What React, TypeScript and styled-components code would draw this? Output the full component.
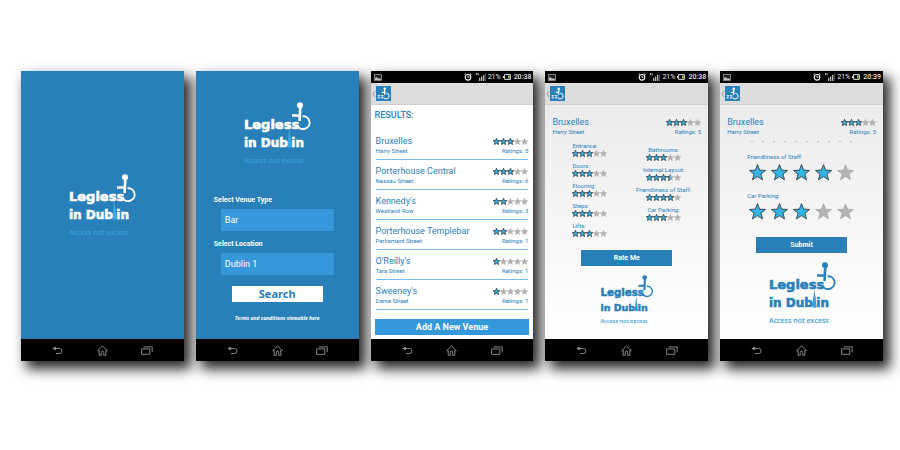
import React, { useId, useState } from "react";
import styled, { createGlobalStyle } from "styled-components";

const blue = "#2980b9";
const bright = "#3498db";
const starBlue = "#33b5e5";

const GlobalStyle = createGlobalStyle`
  *, *::before, *::after { box-sizing: border-box; }
  body { margin: 0; background: #fff; font-family: Roboto, sans-serif; }
  button, select { font-family: inherit; border: 0; border-radius: 0; margin: 0; padding: 0; cursor: pointer; }
  svg { display: block; }
`;

const Board = styled.main`
  display: grid;
  grid-template-columns: repeat(5, 1fr);
  gap: 12px;
  padding: 71px 17px 40px 21px;
`;

const Phone = styled.section`
  display: flex;
  flex-direction: column;
  min-width: 0;
  box-shadow: 6px 7px 12px 1px rgba(0, 0, 0, 0.85);
`;

type Tone = "blue" | "white" | "grey";
const tones: Record<Tone, string> = {
  blue,
  white: "#fff",
  grey: "linear-gradient(#e8e8e8, #f3f3f3 45%, #fff)",
};

const Screen = styled.div<{ $tone: Tone; $center?: boolean }>`
  flex: 1;
  display: flex;
  flex-direction: column;
  justify-content: ${(p) => (p.$center ? "center" : "flex-start")};
  background: ${(p) => tones[p.$tone]};
  color: ${(p) => (p.$tone === "blue" ? "#fff" : blue)};
`;

const NavBar = styled.nav`
  display: grid;
  grid-template-columns: repeat(3, 1fr);
  height: 22px;
  padding: 0 14px;
  background: #000;
`;

const NavButton = styled.button`
  display: grid;
  place-items: center;
  background: none;
`;

const StatusBar = styled.div`
  display: flex;
  align-items: center;
  gap: 2px;
  height: 12px;
  padding: 0 2px 0 3px;
  background: #000;
  color: #e8e8e8;
  font-size: 7px;
  line-height: 12px;
`;

const Push = styled.span`
  flex: 1;
`;

const Clock = styled.time`
  padding-left: 1px;
  font-weight: 500;
`;

const ActionBar = styled.header`
  display: flex;
  align-items: center;
  height: 22px;
  padding: 0 1px;
  background: #dcdcdc;
  border-bottom: 1px solid #cfcfcf;
`;

const HomeButton = styled.button`
  display: flex;
  align-items: center;
  background: none;
`;

const LogoSvg = styled.svg<{ $small?: boolean }>`
  width: ${(p) => (p.$small ? 53 : 66)}px;
  height: ${(p) => (p.$small ? 49 : 62)}px;
  flex: none;
  align-self: center;
  overflow: visible;
`;

const SearchForm = styled.form`
  display: flex;
  flex-direction: column;
  padding: 31px 25px 17px;
`;

const FieldLabel = styled.label<{ $first?: boolean }>`
  margin: ${(p) => (p.$first ? 31 : 8)}px 0 4px -7px;
  font-size: 7px;
  font-weight: 700;
  line-height: 10px;
`;

const Select = styled.select`
  appearance: none;
  height: 22px;
  padding: 0 4px;
  background: ${bright};
  color: #fff;
  font-size: 9px;
`;

const SearchButton = styled.button`
  height: 16px;
  margin: 11px 11px 12px;
  background: #fff;
  color: ${blue};
  font: 700 11px/16px "Noto Sans", sans-serif;
`;

const Terms = styled.a`
  align-self: center;
  color: #fff;
  font: italic 700 5px/8px "Open Sans", sans-serif;
  text-decoration: none;
  white-space: nowrap;
`;

const Results = styled.div`
  display: flex;
  flex-direction: column;
  padding: 4px 4px;
`;

const ResultsTitle = styled.h2`
  margin: 0 0 9px;
  font-size: 9px;
  font-weight: 500;
  line-height: 12px;
`;

const VenueList = styled.ul`
  list-style: none;
  margin: 0 1px 9px;
  padding: 0;
`;

const VenueItem = styled.li`
  padding: 5px 0 4px;
  border-bottom: 1px solid #7abcf0;
`;

const VenueLine = styled.div<{ $h: number }>`
  display: flex;
  align-items: center;
  justify-content: space-between;
  height: ${(p) => p.$h}px;
  line-height: ${(p) => p.$h}px;
  font-size: 6px;
  white-space: nowrap;
`;

const VenueName = styled.h3`
  margin: 0;
  font-size: 9px;
  font-weight: 400;
`;

const AddButton = styled.button`
  height: 16px;
  background: ${bright};
  color: #fff;
  font-size: 9px;
  font-weight: 700;
`;

const VenueHeader = styled.div`
  padding: 11px 7px 0;
`;

const ScoreColumns = styled.div`
  display: flex;
  justify-content: space-between;
  padding: 6px 17px 0 27px;
`;

const ScoreColumn = styled.div<{ $centered?: boolean }>`
  display: flex;
  flex-direction: column;
  gap: 5px;
  align-items: ${(p) => (p.$centered ? "center" : "flex-start")};
  padding-top: ${(p) => (p.$centered ? 4 : 0)}px;
`;

const Score = styled.div`
  display: flex;
  flex-direction: column;
  align-items: inherit;
  font-size: 6px;
  line-height: 8px;
  white-space: nowrap;
`;

const Stars = styled.div`
  display: flex;
`;

const MainButton = styled.button<{ $gap: number }>`
  height: 16px;
  margin: ${(p) => p.$gap}px 36px 9px;
  background: ${blue};
  color: #fff;
  font-size: 7px;
  font-weight: 700;
`;

const ScrollHint = styled.div`
  display: flex;
  justify-content: space-between;
  margin: 5px 31px 11px;
`;

const Speck = styled.i`
  width: 2px;
  height: 1px;
  background: #bdbdbd;
`;

const RateGroup = styled.fieldset`
  margin: 0 0 11px;
  padding: 0 0 0 27px;
  border: 0;
  min-width: 0;
`;

const RateLegend = styled.legend`
  padding: 0;
  margin-bottom: 3px;
  font-size: 6px;
  line-height: 8px;
`;

const RateStars = styled.div`
  display: flex;
  gap: 5px;
  padding-left: 2px;
`;

const RateStar = styled.label`
  display: grid;
  cursor: pointer;
  > * { grid-area: 1 / 1; }
`;

const RateInput = styled.input`
  appearance: none;
  width: 17px;
  height: 17px;
  margin: 0;
`;

const starPath = "M10 .8l2.5 6.5 6.9.3-5.4 4.3 1.9 6.7L10 14.8l-5.9 3.8L6 11.9.6 7.6l6.9-.3z";

function Star({ size, fill }: { size: number; fill: number }) {
  const id = useId();
  const big = size > 10;
  return (
    <svg width={size} height={size} viewBox="0 0 20 20" aria-hidden="true">
      <path d={starPath} fill="#b3b3b3" stroke="#9a9a9a" strokeWidth={big ? 0.7 : 1} />
      {fill > 0 && (
        <>
          <clipPath id={id}>
            <rect width={20 * fill} height="20" />
          </clipPath>
          <path
            d={starPath}
            clipPath={`url(#${id})`}
            fill={starBlue}
            stroke="#3c4b54"
            strokeWidth={big ? 1.1 : 2.4}
          />
        </>
      )}
    </svg>
  );
}

function Rating({ value }: { value: number }) {
  return (
    <Stars role="img" aria-label={`${value} out of 5`}>
      {[0, 1, 2, 3, 4].map((i) => (
        <Star key={i} size={7} fill={Math.max(0, Math.min(1, value - i))} />
      ))}
    </Stars>
  );
}

function RateField({ label, initial }: { label: string; initial: number }) {
  const [value, setValue] = useState(initial);
  const name = useId();
  return (
    <RateGroup>
      <RateLegend>{label}</RateLegend>
      <RateStars>
        {[1, 2, 3, 4, 5].map((n) => (
          <RateStar key={n}>
            <RateInput
              type="radio"
              name={name}
              aria-label={`${n} stars`}
              checked={value === n}
              onChange={() => setValue(n)}
            />
            <Star size={17} fill={n <= value ? 1 : 0} />
          </RateStar>
        ))}
      </RateStars>
    </RateGroup>
  );
}

function Logo({ light, small }: { light?: boolean; small?: boolean }) {
  const ink = light ? "#fff" : blue;
  const accent = light ? "#3ba9e2" : "#3a9fdb";
  return (
    <LogoSvg $small={small} viewBox="0 0 66 62">
      <path d="M45.4 27l2.2 18.5h-4.4z" fill={accent} />
      <g fontFamily="DejaVu Sans, sans-serif" fontWeight="700" fill={ink} stroke={ink} strokeWidth=".6">
        <text x="0" y="27" fontSize="13">Legless</text>
        <text x="0" y="45" fontSize="12">
          in Dub<tspan fill={accent} stroke={accent} fontWeight="400">l</tspan>in
        </text>
      </g>
      <circle cx="56" cy="3.2" r="3" fill={ink} />
      <path d="M56.3 5L55.6 19M48 13.5h8" fill="none" stroke={ink} strokeWidth="2.6" />
      <path d="M58.6 14.3a6.4 6.4 0 1 1-5.2 9" fill="none" stroke={ink} strokeWidth="1.9" />
      <text
        x="0"
        y="60.5"
        fontFamily="Open Sans, sans-serif"
        fontWeight="600"
        fontSize="7"
        fill={accent}
        opacity={light ? 0.8 : 1}
      >
        Access not excess
      </text>
    </LogoSvg>
  );
}

function SystemNav() {
  return (
    <NavBar aria-label="System">
      <NavButton type="button" aria-label="Back">
        <svg width="11" height="9" viewBox="0 0 11 9" fill="none" stroke="#959595" strokeWidth=".9">
          <path d="M2 2.5h5.5a2.5 2.5 0 0 1 0 5H4" />
          <path d="M3.8 .5v4L.4 2.5z" fill="#959595" stroke="none" />
        </svg>
      </NavButton>
      <NavButton type="button" aria-label="Home">
        <svg width="11" height="11" viewBox="0 0 11 11" fill="none" stroke="#959595" strokeWidth=".9">
          <path d="M.7 5.7L5.5 .9l4.8 4.8H8.8v4.6H6.7V7.2a1.2 1.2 0 0 0-2.4 0v3.1H2.2V5.7z" />
        </svg>
      </NavButton>
      <NavButton type="button" aria-label="Recent apps">
        <svg width="12" height="9" viewBox="0 0 12 9" fill="none" stroke="#959595" strokeWidth=".9">
          <path d="M.6 2.9h8.2v5.4H.6zM2.6.9h8.6v5.3" />
        </svg>
      </NavButton>
    </NavBar>
  );
}

function TopBars({ time }: { time: string }) {
  return (
    <>
      <StatusBar>
        <svg width="8" height="7" viewBox="0 0 8 7">
          <rect x=".5" y=".5" width="7" height="6" fill="#222" stroke="#999" strokeWidth=".8" />
          <path d="M1 6V4l1.5-1 1.6 1.4L5.5 4.2 7 5v1z" fill="#bbb" />
        </svg>
        <Push />
        <svg width="8" height="8" viewBox="0 0 8 8" fill="none" stroke="#fff">
          <circle cx="4" cy="4.3" r="2.8" strokeWidth="1.1" />
          <path d="M4 2.8v1.6h1.3M.5 1.8L2 .6M7.5 1.8L6 .6" strokeWidth=".9" />
        </svg>
        <svg width="12" height="8" viewBox="0 0 12 8" fill="#bbb">
          <path d="M2 0h1v2H2zM3.6 0h1v2.6h-1zM5 4.8h1.3V8H5zM7 3.6h1.3V8H7zM9 2h1.3v6H9z" />
          <path d="M10.8 .6h1V8h-1z" fill="#666" />
        </svg>
        <span>21%</span>
        <svg width="8" height="6" viewBox="0 0 8 6">
          <path d="M1.6 .6h5.8v4.8H1.6zM.5 2v2" fill="none" stroke="#ddd" />
          <path d="M5 1.4h1.7v3.2H5z" fill="#a4cf3c" />
        </svg>
        <Clock>{time}</Clock>
      </StatusBar>
      <ActionBar>
        <HomeButton type="button" aria-label="Navigate up">
          <svg width="4" height="8" viewBox="0 0 4 8" fill="none" stroke="#8f8f8f" strokeWidth=".9">
            <path d="M3 1L1 4l2 3" />
          </svg>
          <svg width="15" height="15" viewBox="0 0 15 15" fill="none" stroke="#fff">
            <rect width="15" height="15" fill={blue} stroke="none" />
            <circle cx="8.7" cy="2.7" r="1.3" fill="#fff" stroke="none" />
            <path d="M8.7 3.5v5.3M5.8 6.3h3" strokeWidth="1.3" />
            <path d="M10.3 7.2a2.9 2.9 0 1 1-2.8 4" />
            <path d="M1.6 9.5h2.2L1.8 12H4M4.9 9.5h2.2L5.1 12h2.2" strokeWidth=".8" />
          </svg>
        </HomeButton>
      </ActionBar>
    </>
  );
}

interface Venue {
  name: string;
  street: string;
  stars: number;
  ratings: number;
}

const venues: Venue[] = [
  { name: "Bruxelles", street: "Harry Street", stars: 3, ratings: 5 },
  { name: "Porterhouse Central", street: "Nassau Street", stars: 3, ratings: 6 },
  { name: "Kennedy's", street: "Westland Row", stars: 2, ratings: 3 },
  { name: "Porterhouse Templebar", street: "Parliament Street", stars: 2, ratings: 1 },
  { name: "O'Reilly's", street: "Tara Street", stars: 1, ratings: 1 },
  { name: "Sweeney's", street: "Dame Street", stars: 1, ratings: 1 },
];

const leftScores: [string, number][] = [
  ["Entrance:", 3],
  ["Doors:", 3],
  ["Flooring:", 3],
  ["Steps:", 3],
  ["Lifts:", 3],
];

const rightScores: [string, number][] = [
  ["Bathrooms:", 3],
  ["Internal Layout:", 3.5],
  ["Friendliness of Staff:", 4],
  ["Car Parking:", 3],
];

function VenueSummary({ venue }: { venue: Venue }) {
  return (
    <>
      <VenueLine $h={12}>
        <VenueName>{venue.name}</VenueName>
        <Rating value={venue.stars} />
      </VenueLine>
      <VenueLine $h={8}>
        <span>{venue.street}</span>
        <span>Ratings: {venue.ratings}</span>
      </VenueLine>
    </>
  );
}

function Scores({ items, centered }: { items: [string, number][]; centered?: boolean }) {
  return (
    <ScoreColumn $centered={centered}>
      {items.map(([label, value]) => (
        <Score key={label}>
          {label}
          <Rating value={value} />
        </Score>
      ))}
    </ScoreColumn>
  );
}

export default function App() {
  return (
    <>
      <GlobalStyle />
      <Board>
        <Phone>
          <Screen $tone="blue" $center>
            <Logo light />
          </Screen>
          <SystemNav />
        </Phone>

        <Phone>
          <Screen $tone="blue">
            <SearchForm onSubmit={(e) => e.preventDefault()}>
              <Logo light />
              <FieldLabel htmlFor="venue-type" $first>Select Venue Type</FieldLabel>
              <Select id="venue-type">
                <option>Bar</option>
              </Select>
              <FieldLabel htmlFor="location">Select Location</FieldLabel>
              <Select id="location">
                <option>Dublin 1</option>
              </Select>
              <SearchButton type="submit">Search</SearchButton>
              <Terms href="#terms">Terms and conditions viewable here</Terms>
            </SearchForm>
          </Screen>
          <SystemNav />
        </Phone>

        <Phone>
          <Screen $tone="white">
            <TopBars time="20:38" />
            <Results>
              <ResultsTitle>RESULTS:</ResultsTitle>
              <VenueList>
                {venues.map((v) => (
                  <VenueItem key={v.name}>
                    <VenueSummary venue={v} />
                  </VenueItem>
                ))}
              </VenueList>
              <AddButton type="button">Add A New Venue</AddButton>
            </Results>
          </Screen>
          <SystemNav />
        </Phone>

        <Phone>
          <Screen $tone="grey">
            <TopBars time="20:38" />
            <VenueHeader>
              <VenueSummary venue={venues[0]} />
            </VenueHeader>
            <ScoreColumns>
              <Scores items={leftScores} />
              <Scores items={rightScores} centered />
            </ScoreColumns>
            <MainButton type="button" $gap={13}>Rate Me</MainButton>
            <Logo small />
          </Screen>
          <SystemNav />
        </Phone>

        <Phone>
          <Screen $tone="grey">
            <TopBars time="20:39" />
            <VenueHeader>
              <VenueSummary venue={venues[0]} />
            </VenueHeader>
            <ScrollHint aria-hidden="true">
              {Array.from({ length: 10 }, (_, i) => (
                <Speck key={i} />
              ))}
            </ScrollHint>
            <RateField label="Friendliness of Staff:" initial={4} />
            <RateField label="Car Parking:" initial={3} />
            <MainButton type="button" $gap={6}>Submit</MainButton>
            <Logo />
          </Screen>
          <SystemNav />
        </Phone>
      </Board>
    </>
  );
}
